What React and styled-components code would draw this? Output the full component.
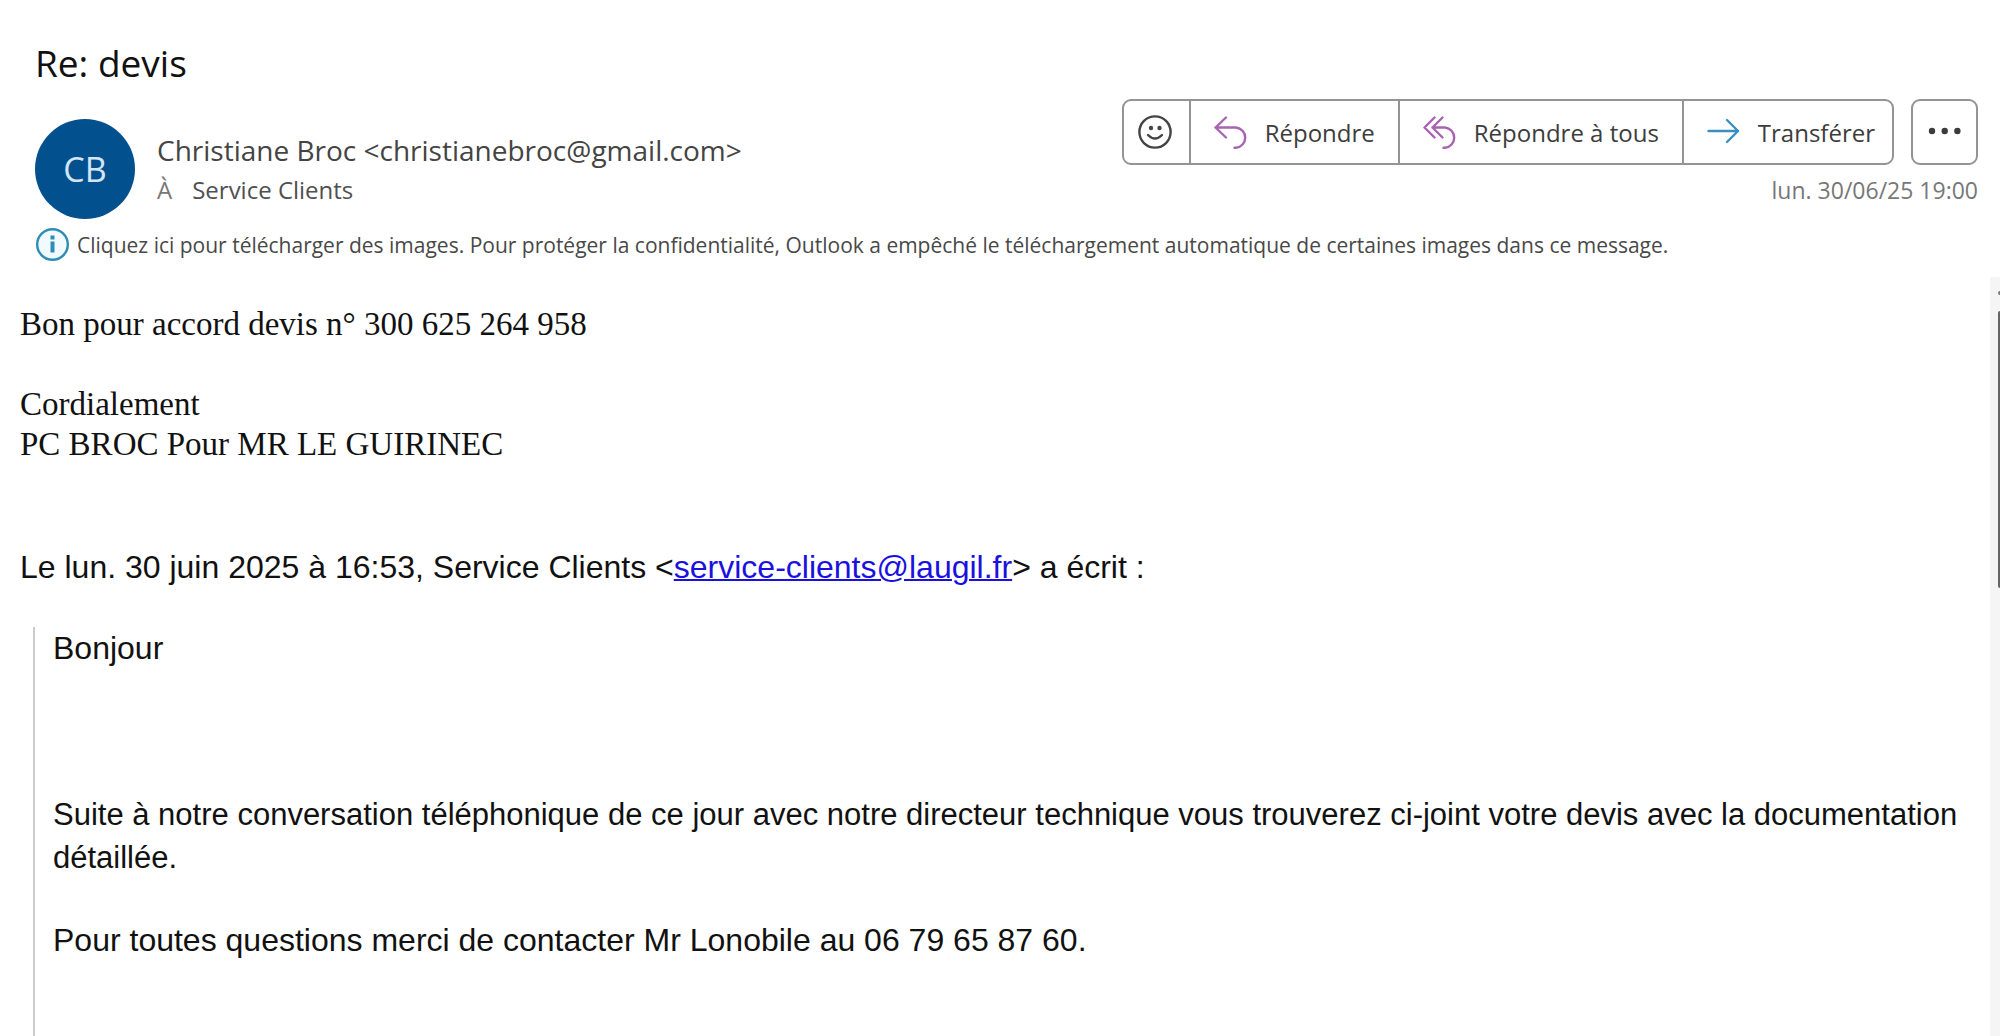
import React from 'react';
import styled, { createGlobalStyle } from 'styled-components';

const uiFont = '"Open Sans", "Noto Sans", sans-serif';

const GlobalStyle = createGlobalStyle`
  * { box-sizing: border-box; }
  body { margin: 0; background: #fff; }
  h1, p { margin: 0; }
`;

const Page = styled.div`
  display: flex;
  flex-direction: column;
  min-height: 100vh;
  font-family: ${uiFont};
  color: #444;
`;

const Header = styled.header`
  padding: 39px 22px 14px 35px;
`;

const Subject = styled.h1`
  font-size: 37px;
  font-weight: 400;
  line-height: 48px;
  color: #111;
`;

const HeaderRow = styled.div`
  display: flex;
  justify-content: space-between;
  margin-top: 12px;
`;

const Sender = styled.div`
  display: flex;
  gap: 22px;
  padding-top: 20px;
`;

const Avatar = styled.div`
  display: flex;
  align-items: center;
  justify-content: center;
  flex: none;
  width: 100px;
  height: 100px;
  border-radius: 50%;
  background: #03508f;
  color: #d3e6f5;
  font-size: 34px;
`;

const SenderText = styled.div`
  padding-top: 10px;
`;

const SenderName = styled.p`
  font-size: 28px;
  line-height: 43px;
`;

const Recipient = styled.p`
  display: flex;
  gap: 20px;
  font-size: 24px;
  line-height: 36px;
  color: #505050;
`;

const RecipientLabel = styled.span`
  color: #777;
`;

const Actions = styled.div`
  display: flex;
  flex-direction: column;
  align-items: flex-end;
  gap: 7px;
`;

const Toolbar = styled.div`
  display: flex;
  gap: 17px;
`;

const ButtonGroup = styled.div`
  display: flex;
  border: 2px solid #949494;
  border-radius: 9px;
`;

const ActionButton = styled.button`
  display: flex;
  align-items: center;
  gap: 17px;
  height: 62px;
  padding: 0 23px;
  border: 0;
  border-left: 2px solid #949494;
  background: transparent;
  color: #3c3c3c;
  font-family: ${uiFont};
  font-size: 24px;
  white-space: nowrap;
  cursor: pointer;

  &:first-child {
    border-left: 0;
    padding: 0 17px 0 14px;
  }

  &:last-child {
    padding-right: 17px;
  }
`;

const MoreButton = styled.button`
  display: flex;
  align-items: center;
  justify-content: center;
  width: 67px;
  height: 66px;
  padding: 0;
  border: 2px solid #949494;
  border-radius: 9px;
  background: transparent;
  color: #3c3c3c;
  cursor: pointer;
`;

const Icon = styled.svg`
  flex: none;
  width: 34px;
  height: 34px;
  fill: none;
  stroke: ${({ $color }) => $color};
  stroke-width: 2.4;
  stroke-linecap: round;
  stroke-linejoin: round;
`;

const SentDate = styled.time`
  font-size: 23px;
  line-height: 36px;
  color: #777;
`;

const InfoBar = styled.button`
  display: flex;
  align-items: center;
  gap: 8px;
  margin-top: 8px;
  padding: 0;
  border: 0;
  background: transparent;
  color: #484848;
  font-family: ${uiFont};
  font-size: 21px;
  line-height: 36px;
  text-align: left;
  cursor: pointer;
`;

const Body = styled.div`
  display: flex;
  flex: 1;
`;

const Message = styled.main`
  display: flex;
  flex: 1;
  flex-direction: column;
  padding: 27px 0 0 20px;
  color: #111;
`;

const Reply = styled.div`
  font-family: "Liberation Serif", "Times New Roman", serif;
  font-size: 33px;
  line-height: 40px;
`;

const Paragraph = styled.p`
  min-height: ${({ $lineHeight }) => $lineHeight || 43}px;
`;

const Attribution = styled.p`
  margin: 82px 0 38px;
  font: 32px/43px "Liberation Sans", Arial, sans-serif;
`;

const MailLink = styled.a`
  color: #1a10e0;
  text-decoration: underline;
  text-decoration-thickness: 2px;
`;

const Quote = styled.blockquote`
  display: flex;
  flex: 1;
  flex-direction: column;
  gap: 40px;
  margin: 0 0 0 13px;
  padding-left: 18px;
  border-left: 2px solid #ccc;
  font: 32px/43px "Liberation Sans", Arial, sans-serif;
`;

const LongParagraph = styled(Paragraph)`
  font-size: 31px;
`;

const ScrollTrack = styled.div`
  display: flex;
  flex-direction: column;
  align-items: flex-end;
  gap: 16px;
  width: 10px;
  padding-top: 14px;
  background: #f5f5f5;
`;

const ScrollArrow = styled.div`
  width: 2px;
  height: 4px;
  border-radius: 2px 0 0 2px;
  background: #777;
`;

const ScrollThumb = styled.div`
  width: 2px;
  height: 277px;
  border-radius: 2px 0 0 2px;
  background: #666;
`;

export default function App() {
  return (
    <Page>
      <GlobalStyle />
      <Header>
        <Subject>Re: devis</Subject>
        <HeaderRow>
          <Sender>
            <Avatar>CB</Avatar>
            <SenderText>
              <SenderName>Christiane Broc &lt;christianebroc@gmail.com&gt;</SenderName>
              <Recipient>
                <RecipientLabel>À</RecipientLabel>
                <span>Service Clients</span>
              </Recipient>
            </SenderText>
          </Sender>
          <Actions>
            <Toolbar>
              <ButtonGroup>
                <ActionButton type="button" aria-label="Réagir">
                  <Icon viewBox="0 0 34 34" $color="#444">
                    <circle cx="17" cy="17" r="15.6" />
                    <circle cx="13" cy="13" r="2.2" fill="#444" stroke="none" />
                    <circle cx="21.5" cy="13" r="2.2" fill="#444" stroke="none" />
                    <path d="M10 20Q17 27 24 20" />
                  </Icon>
                </ActionButton>
                <ActionButton type="button">
                  <Icon viewBox="0 0 34 34" $color="#a963b3">
                    <path d="M12 2.5L1.5 12.5L12 22.5M1.5 12.5H22A10.2 10.2 0 0 1 22 32.8H20.5" />
                  </Icon>
                  Répondre
                </ActionButton>
                <ActionButton type="button">
                  <Icon viewBox="0 0 34 34" $color="#a963b3">
                    <path d="M11.5 2.5L1.5 12.5L11.5 22.5M19.5 2.5L9.5 12.5L19.5 22.5M9.5 12.5H22A10.2 10.2 0 0 1 22 32.8H20.5" />
                  </Icon>
                  Répondre à tous
                </ActionButton>
                <ActionButton type="button">
                  <Icon viewBox="0 0 34 34" $color="#3a8fc0">
                    <path d="M1.5 16H31M20 5L31 16L20 27" />
                  </Icon>
                  Transférer
                </ActionButton>
              </ButtonGroup>
              <MoreButton type="button" aria-label="Plus d'actions">
                <Icon viewBox="0 0 34 34" $color="none">
                  <g fill="#3c3c3c">
                    <circle cx="4" cy="16" r="3.2" />
                    <circle cx="16.7" cy="16" r="3.2" />
                    <circle cx="29.4" cy="16" r="3.2" />
                  </g>
                </Icon>
              </MoreButton>
            </Toolbar>
            <SentDate dateTime="2025-06-30T19:00">lun. 30/06/25 19:00</SentDate>
          </Actions>
        </HeaderRow>
        <InfoBar type="button">
          <Icon viewBox="0 0 34 34" $color="#2f8db5">
            <circle cx="17.5" cy="16.5" r="15.3" fill="#f1fbff" />
            <path d="M17.5 13.5V24.5" strokeWidth="4" strokeLinecap="butt" />
            <path d="M17.5 7.5V11.5" strokeWidth="4" strokeLinecap="butt" />
          </Icon>
          Cliquez ici pour télécharger des images. Pour protéger la confidentialité, Outlook a empêché le téléchargement automatique de certaines images dans ce message.
        </InfoBar>
      </Header>
      <Body>
        <Message>
          <Reply>
            <Paragraph $lineHeight={40}>Bon pour accord devis n° 300 625 264 958</Paragraph>
            <Paragraph $lineHeight={40} />
            <Paragraph $lineHeight={40}>Cordialement</Paragraph>
            <Paragraph $lineHeight={40}>PC BROC Pour MR LE GUIRINEC</Paragraph>
          </Reply>
          <Attribution>
            Le lun. 30 juin 2025 à 16:53, Service Clients &lt;
            <MailLink href="mailto:service-clients@laugil.fr">service-clients@laugil.fr</MailLink>
            &gt; a écrit :
          </Attribution>
          <Quote>
            <Paragraph>Bonjour</Paragraph>
            <Paragraph />
            <LongParagraph>
              Suite à notre conversation téléphonique de ce jour avec notre directeur technique vous trouverez ci-joint votre devis avec la documentation détaillée.
            </LongParagraph>
            <Paragraph>Pour toutes questions merci de contacter Mr Lonobile au 06 79 65 87 60.</Paragraph>
          </Quote>
        </Message>
        <ScrollTrack aria-hidden="true">
          <ScrollArrow />
          <ScrollThumb />
        </ScrollTrack>
      </Body>
    </Page>
  );
}
